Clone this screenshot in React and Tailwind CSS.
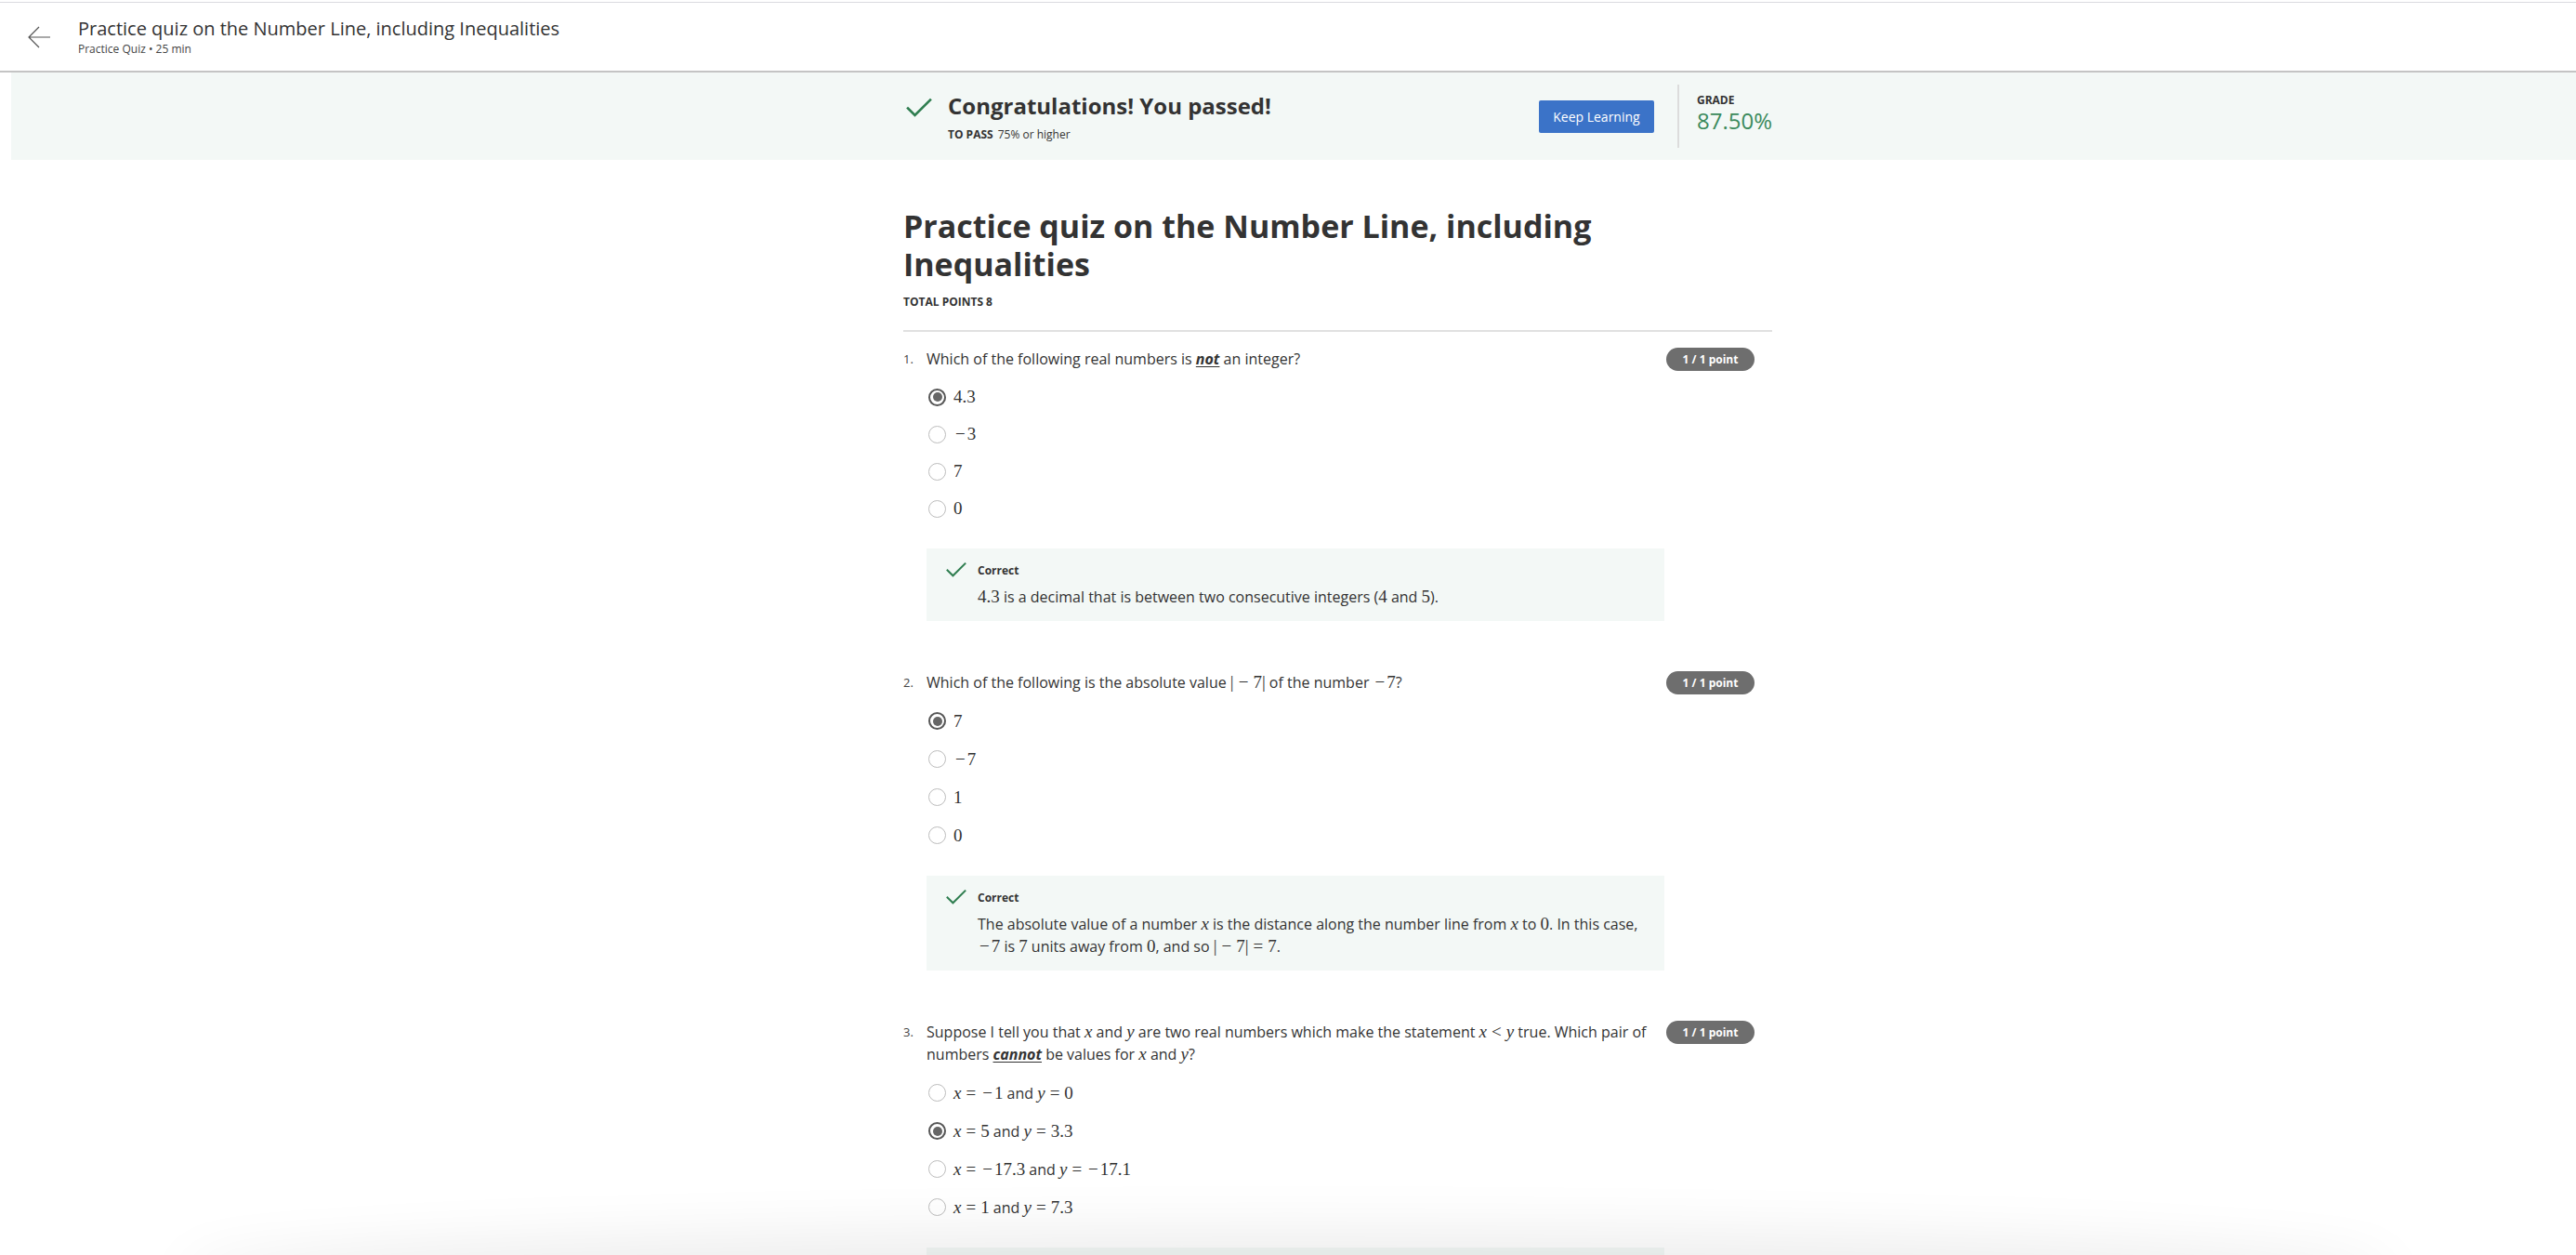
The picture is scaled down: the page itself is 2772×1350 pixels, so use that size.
import React from 'react'

const M = ({ children }) => (
  <span className="font-['Liberation_Serif',serif] text-[19px]">{children}</span>
)
const V = ({ children }) => <span className="italic">{children}</span>
const Eq = ({ sign = '=' }) => <span className="mx-[5px]">{sign}</span>
const Neg = () => <span className="mx-[2px]">−</span>

function Check({ className }) {
  return (
    <svg className={className} viewBox="0 0 28 22" fill="none">
      <path d="M2 11.5L9.5 19L26 2.5" stroke="#2e7d4f" strokeWidth="2.6" strokeLinecap="square" />
    </svg>
  )
}

function Radio({ selected }) {
  if (selected) {
    return (
      <span className="ml-[2px] flex h-[19px] w-[19px] items-center justify-center rounded-full border-2 border-[#575757]">
        <span className="h-[10px] w-[10px] rounded-full bg-[#666]" />
      </span>
    )
  }
  return <span className="ml-[2px] h-[19px] w-[19px] rounded-full border-[1.5px] border-[#bdbdbd]" />
}

function Question({ num, text, options, selected, feedback, rowH = 'h-[40px]' }) {
  return (
    <div className="flex">
      <div className="w-[25px] pt-[2px] text-[13px] leading-[20px] text-[#444]">{num}.</div>
      <div className="w-[794px]">
        <div className="text-[16px] leading-[24px] text-[#333]">{text}</div>
        <div className="mt-[9px]">
          {options.map((opt, i) => (
            <div key={i} className={`flex items-center ${rowH}`}>
              <Radio selected={i === selected} />
              <span className="ml-[8px] text-[16px] leading-[24px] text-[#333]">{opt}</span>
            </div>
          ))}
        </div>
        <div className="mt-[23px] flex bg-[#f3f8f6] pb-[14px] pl-[21px] pr-4 pt-4">
          <Check className="mt-[-2px] h-[18px] w-[22px] shrink-0" />
          <div className="ml-[12px]">
            <div className="text-[12px] font-bold leading-[16px] text-[#333]">Correct</div>
            <div className="mt-2 text-[16px] leading-[24px] text-[#333]">{feedback}</div>
          </div>
        </div>
      </div>
      <div className="ml-[2px] flex h-[25px] w-[95px] shrink-0 items-center justify-center rounded-full bg-[#6e6e6e] text-[12px] font-bold text-white">
        1 / 1 point
      </div>
    </div>
  )
}

export default function App() {
  return (
    <div className="relative h-[1350px] overflow-hidden bg-white font-['Open_Sans',sans-serif] text-[#333]">
      {/* top bar */}
      <div className="pt-[2px]">
        <div className="flex h-[76px] items-center border-t border-b-2 border-t-[#dadae0] border-b-[#c4c4c4]">
          <svg className="ml-[29px] h-[26px] w-[26px]" viewBox="0 0 26 26" fill="none">
            <path d="M25 13H2M13 2L2 13l11 11" stroke="#555" strokeWidth="1.2" />
          </svg>
          <div className="ml-[29px]">
            <div className="text-[20px] leading-[24px] text-[#333]">Practice quiz on the Number Line, including Inequalities</div>
            <div className="mt-[2px] text-[12px] leading-[16px] text-[#444]">Practice Quiz • 25 min</div>
          </div>
        </div>
      </div>

      {/* passed banner */}
      <div className="ml-[12px] flex h-[94px] items-center bg-[#f3f8f6] pl-[960px]">
        <div className="flex w-[935px] items-center">
          <div className="flex flex-1 items-start">
            <Check className="ml-[3px] mt-[7px] h-[22px] w-[28px]" />
            <div className="ml-[17px]">
              <div className="text-[24px] font-bold leading-[32px] text-[#333]">Congratulations! You passed!</div>
              <div className="mt-[7px] text-[12px] leading-[16px] text-[#333]">
                <span className="font-bold">TO PASS</span>
                <span className="ml-[5px]">75% or higher</span>
              </div>
            </div>
          </div>
          <button className="h-[35px] w-[124px] rounded-[2px] bg-[#3b73c8] text-[14px] text-white">Keep Learning</button>
          <div className="ml-[25px] h-[68px] w-[2px] bg-[#dcdcdc]" />
          <div className="mb-[6px] ml-[19px]">
            <div className="text-[12px] font-bold leading-[16px] text-[#333]">GRADE</div>
            <div className="text-[24px] leading-[28px] text-[#3b8a5c]">87.50%</div>
          </div>
        </div>
      </div>

      {/* quiz body */}
      <div className="ml-[972px] w-[935px]">
        <h1 className="mt-[51px] text-[34px] font-bold leading-[41px] text-[#333]">
          Practice quiz on the Number Line, including Inequalities
        </h1>
        <div className="mt-[12px] text-[12px] font-bold leading-[16px]">TOTAL POINTS 8</div>
        <div className="mt-[22px] h-[2px] bg-[#e1e1e1]" />

        <div className="mt-[17px]">
          <Question
            num={1}
            text={<>Which of the following real numbers is <span className="font-bold italic underline underline-offset-2">not</span> an integer?</>}
            selected={0}
            options={[<M>4.3</M>, <M><Neg />3</M>, <M>7</M>, <M>0</M>]}
            feedback={<><M>4.3</M> is a decimal that is between two consecutive integers (<M>4</M> and <M>5</M>).</>}
          />
        </div>

        <div className="mt-[54px]">
          <Question
            num={2}
            text={<>Which of the following is the absolute value <M>|<Eq sign="−" />7|</M> of the number <M><Neg />7</M>?</>}
            selected={0}
            rowH="h-[41px]"
            options={[<M>7</M>, <M><Neg />7</M>, <M>1</M>, <M>0</M>]}
            feedback={
              <>
                The absolute value of a number <M><V>x</V></M> is the distance along the number line from <M><V>x</V></M> to <M>0</M>. In this case,{' '}
                <M><Neg />7</M> is <M>7</M> units away from <M>0</M>, and so <M>|<Eq sign="−" />7|<Eq />7</M>.
              </>
            }
          />
        </div>

        <div className="mt-[54px]">
          <Question
            num={3}
            text={
              <>
                Suppose I tell you that <M><V>x</V></M> and <M><V>y</V></M> are two real numbers which make the statement <M><V>x</V><Eq sign="<" /><V>y</V></M> true. Which pair of
                numbers <span className="font-bold italic underline underline-offset-2">cannot</span> be values for <M><V>x</V></M> and <M><V>y</V></M>?
              </>
            }
            selected={1}
            rowH="h-[41px]"
            options={[
              <><M><V>x</V><Eq /><Neg />1</M> and <M><V>y</V><Eq />0</M></>,
              <><M><V>x</V><Eq />5</M> and <M><V>y</V><Eq />3.3</M></>,
              <><M><V>x</V><Eq /><Neg />17.3</M> and <M><V>y</V><Eq /><Neg />17.1</M></>,
              <><M><V>x</V><Eq />1</M> and <M><V>y</V><Eq />7.3</M></>,
            ]}
            feedback={<>If <M><V>x</V><Eq />5</M> and <M><V>y</V><Eq />3.3</M>, then <M><V>x</V><Eq sign=">" /><V>y</V></M>, so the statement <M><V>x</V><Eq sign="<" /><V>y</V></M> is false.</>}
          />
        </div>
      </div>

      {/* sticky footer shadow peeking from below */}
      <div className="pointer-events-none absolute bottom-[-40px] left-[220px] right-[220px] h-[40px] rounded-[50%] shadow-[0_0_60px_28px_rgba(0,0,0,0.07)]" />
    </div>
  )
}
